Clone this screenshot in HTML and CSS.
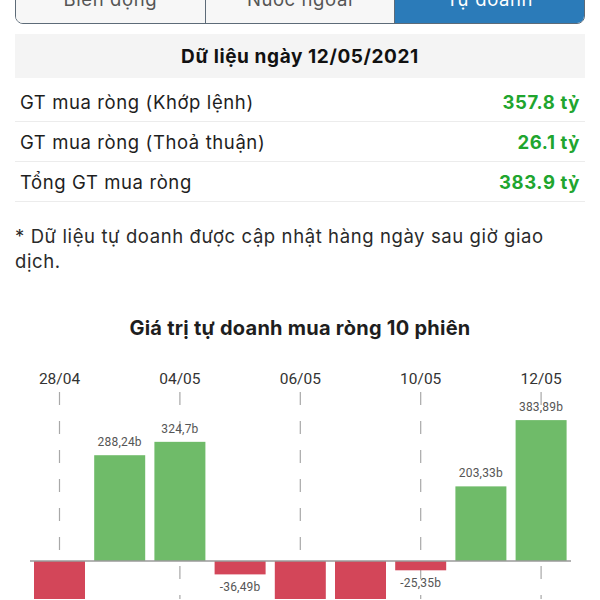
FILE: index.html
```html
<!DOCTYPE html>
<html lang="vi">
<head>
    <meta charset="UTF-8">
    <meta name="viewport" content="width=device-width, initial-scale=1.0">
    <title>Tự doanh</title>
    <link rel="stylesheet" href="styles.css">
</head>
<body>
    <div class="page">
        <div class="tabs">
            <div class="tab">Biến động</div>
            <div class="tab">Nước ngoài</div>
            <div class="tab active">Tự doanh</div>
        </div>

        <div class="summary">
            <div class="summary-header">Dữ liệu ngày 12/05/2021</div>
            <div class="summary-rows">
                <div class="summary-row">
                    <span>GT mua ròng (Khớp lệnh)</span>
                    <span class="value up">357.8 tỷ</span>
                </div>
                <div class="summary-row">
                    <span>GT mua ròng (Thoả thuận)</span>
                    <span class="value up">26.1 tỷ</span>
                </div>
                <div class="summary-row">
                    <span>Tổng GT mua ròng</span>
                    <span class="value up">383.9 tỷ</span>
                </div>
            </div>
        </div>

        <p class="note">* Dữ liệu tự doanh được cập nhật hàng ngày sau giờ giao dịch.</p>

        <h2 class="chart-title">Giá trị tự doanh mua ròng 10 phiên</h2>
    </div>

    <svg class="chart" id="chart" width="600" height="240" viewBox="0 0 600 240"></svg>

    <script>
        const NS = 'http://www.w3.org/2000/svg';

        // net value per session (billions), oldest first
        const sessions = [
            { date: '28/04', value: -180 },
            { date: '29/04', value: 288.24 },
            { date: '04/05', value: 324.7 },
            { date: '05/05', value: -36.49 },
            { date: '06/05', value: -170 },
            { date: '07/05', value: -160 },
            { date: '10/05', value: -25.35 },
            { date: '11/05', value: 203.33 },
            { date: '12/05', value: 383.89 }
        ];

        const startX = 34;
        const step = 60.2;
        const barWidth = 51;
        const zeroY = 202;
        const scale = 0.367;

        function el(name, attrs, text) {
            const node = document.createElementNS(NS, name);
            for (let key in attrs) node.setAttribute(key, attrs[key]);
            if (text) node.textContent = text;
            return node;
        }

        function drawChart() {
            const svg = document.getElementById('chart');

            // dates + dashed guides on every other session
            sessions.forEach((s, i) => {
                if (i % 2 !== 0) return;
                const cx = startX + i * step + barWidth / 2;
                svg.appendChild(el('line', {
                    x1: cx, y1: 33, x2: cx, y2: 240, class: 'guide'
                }));
                svg.appendChild(el('text', {
                    x: cx, y: 25, class: 'date'
                }, s.date));
            });

            // bars
            sessions.forEach((s, i) => {
                const x = startX + i * step;
                const h = Math.abs(s.value) * scale;
                const y = s.value >= 0 ? zeroY - h : zeroY;
                svg.appendChild(el('rect', {
                    x: x, y: y, width: barWidth, height: h,
                    class: s.value >= 0 ? 'bar up' : 'bar down'
                }));
            });

            svg.appendChild(el('line', {
                x1: 30, y1: zeroY, x2: 571, y2: zeroY, class: 'axis'
            }));

            // value labels
            sessions.forEach((s, i) => {
                const cx = startX + i * step + barWidth / 2;
                const h = Math.abs(s.value) * scale;
                const y = s.value >= 0 ? zeroY - h - 9 : zeroY + h + 17;
                const label = String(s.value).replace('.', ',') + 'b';
                svg.appendChild(el('text', { x: cx, y: y, class: 'bar-label' }, label));
            });
        }

        drawChart();
    </script>
</body>
</html>
```

FILE: styles.css
```css
body {
    margin: 0;
    font-family: Inter, "Noto Sans", sans-serif;
    color: #1e1e1e;
    background-color: #ffffff;
}

.page {
    padding: 0 15px;
}

.tabs {
    display: flex;
    box-sizing: border-box;
    height: 50px;
    margin-top: -26px;
    border: 1px solid #5d6b78;
    border-radius: 8px;
    overflow: hidden;
}

.tab {
    flex: 1;
    text-align: center;
    line-height: 48px;
    font-size: 18.5px;
    letter-spacing: 0.6px;
    color: #555555;
    background-color: #f7f7f7;
}

.tab + .tab {
    border-left: 1px solid #5d6b78;
}

.tab.active {
    background-color: #2b7bb9;
    color: #ffffff;
}

.summary-header {
    display: flex;
    align-items: center;
    justify-content: center;
    height: 44px;
    margin-top: 10px;
    background-color: #f4f4f4;
    font-size: 19px;
    letter-spacing: 0.6px;
    font-weight: 700;
    color: #111111;
}

.summary-rows {
    margin-top: 4px;
}

.summary-row {
    display: flex;
    justify-content: space-between;
    align-items: center;
    height: 39px;
    padding: 0 5px;
    border-bottom: 1px solid #ececec;
    font-size: 18.5px;
    letter-spacing: 0.6px;
}

.value {
    font-weight: 700;
}

.up {
    color: #20a52e;
}

.note {
    margin: 22px 0 0;
    font-size: 18.5px;
    letter-spacing: 0.6px;
    line-height: 25px;
    color: #2a2a2a;
}

.chart-title {
    margin: 42px 0 0;
    text-align: center;
    font-size: 20px;
    letter-spacing: 0.25px;
    line-height: 24px;
    font-weight: 700;
    color: #1e1e1e;
}

.chart {
    display: block;
    margin-top: 19px;
    font-family: Roboto, "Noto Sans", sans-serif;
}

.chart .guide {
    stroke: #a8a8a8;
    stroke-width: 1.2;
    stroke-dasharray: 13 16;
}

.chart .axis {
    stroke: #9a9a9a;
    stroke-width: 1.5;
}

.chart .bar.up {
    fill: #6fbb69;
}

.chart .bar.down {
    fill: #d34659;
}

.chart .date {
    font-size: 15.5px;
    fill: #333333;
    text-anchor: middle;
}

.chart .bar-label {
    font-size: 12px;
    letter-spacing: 0.2px;
    fill: #555555;
    text-anchor: middle;
}
```
